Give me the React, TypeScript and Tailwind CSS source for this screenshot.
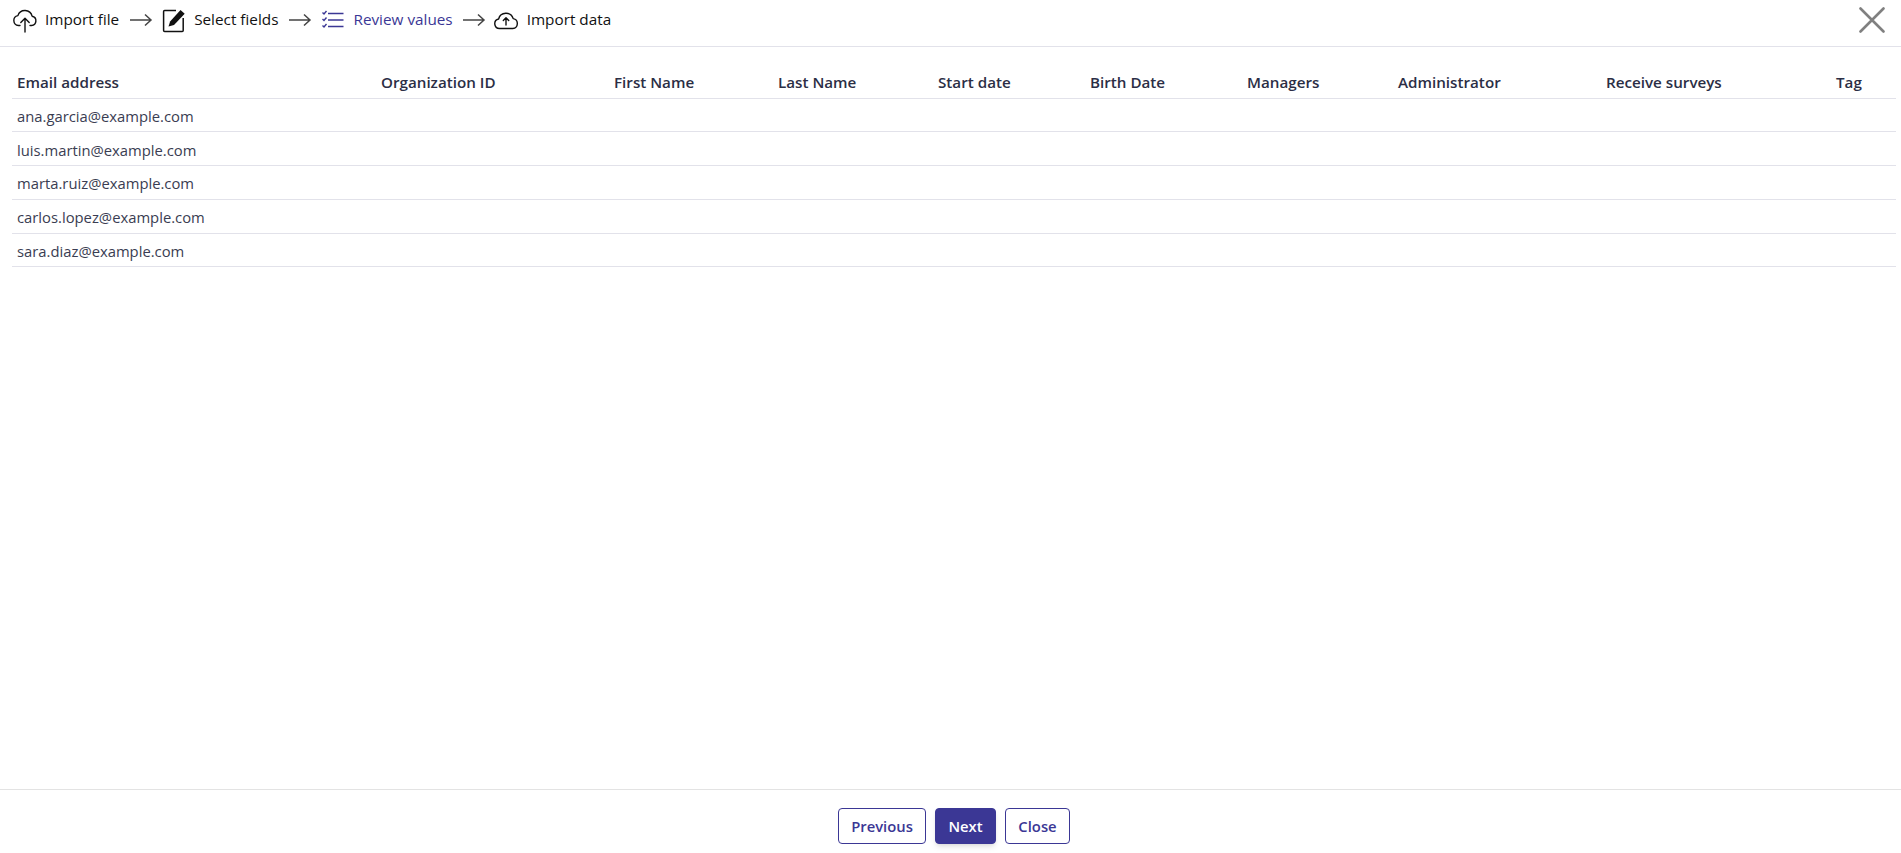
import React from "react";

const font = "font-['Open_Sans','Noto_Sans',sans-serif]";

function CloudUp() {
  return (
    <svg width="26" height="26" viewBox="0 0 26 26" fill="none" stroke="#111" strokeWidth="1.4" strokeLinecap="round" strokeLinejoin="round">
      <path d="M8 18.5H6.5a5 5 0 0 1-.6-9.9 7.4 7.4 0 0 1 14.2 .6 4.7 4.7 0 0 1-.6 9.3H18" />
      <path d="M13 25V11.5M8.8 15.5 13 11.3l4.2 4.2" />
    </svg>
  );
}
function Edit() {
  return (
    <svg width="24" height="26" viewBox="0 0 24 26" fill="none">
      <path d="M14 3.5H2.6a1 1 0 0 0-1 1v19a1 1 0 0 0 1 1h17.6a1 1 0 0 0 1-1V11" stroke="#111" strokeWidth="1.5" />
      <path d="M6.5 19.5l1.6-5L18.5 3l4.2 3.7L12 18l-5.5 1.5z" fill="#111" />
    </svg>
  );
}
function Checks() {
  return (
    <svg width="24" height="22" viewBox="0 0 24 22" fill="none" stroke="#3b3795" strokeWidth="1.4">
      <path d="M7 4.5h15.5M7 11h15.5M7 17.5h15.5" />
      <path d="M1.5 3.5l1.5 1.5 2.5-3M1.5 10l1.5 1.5 2.5-3M1.5 16.5l1.5 1.5 2.5-3" />
    </svg>
  );
}
function Cloud() {
  return (
    <svg width="26" height="22" viewBox="0 0 26 22" fill="none" stroke="#111" strokeWidth="1.4" strokeLinecap="round" strokeLinejoin="round">
      <path d="M6.5 19.5a4.8 4.8 0 0 1-.9-9.5 7.6 7.6 0 0 1 14.6-.4 5 5 0 0 1-.4 9.9z" />
      <path d="M13 16V9M10.3 11.5 13 8.8l2.7 2.7" />
    </svg>
  );
}
function Arrow() {
  return (
    <svg width="24" height="14" viewBox="0 0 24 14" fill="none" stroke="#444" strokeWidth="1.5">
      <path d="M1 7h21M16 1.5 22 7l-6 5.5" />
    </svg>
  );
}

const columns: [string, string][] = [
  ["Email address", "w-[364px]"],
  ["Organization ID", "w-[233px]"],
  ["First Name", "w-[164px]"],
  ["Last Name", "w-[160px]"],
  ["Start date", "w-[152px]"],
  ["Birth Date", "w-[157px]"],
  ["Managers", "w-[151px]"],
  ["Administrator", "w-[208px]"],
  ["Receive surveys", "w-[230px]"],
  ["Tag", "w-auto"],
];
const emails = [
  "ana.garcia@example.com",
  "luis.martin@example.com",
  "marta.ruiz@example.com",
  "carlos.lopez@example.com",
  "sara.diaz@example.com",
];

export default function App() {
  return (
    <div className={`${font} flex h-[853px] flex-col bg-white text-[14.8px]`}>
      <header className="flex h-[47px] items-center justify-between border-b border-[#e2e2ea] pb-[7px] pl-[12px] pr-[16px]">
        <div className="flex items-center text-[15.3px] text-[#111]">
          <CloudUp />
          <span className="ml-[7px]">Import file</span>
          <span className="ml-[10px] mr-[9px] flex"><Arrow /></span>
          <Edit />
          <span className="ml-[8px]">Select fields</span>
          <span className="ml-[10px] mr-[9px] flex"><Arrow /></span>
          <Checks />
          <span className="ml-[8px] text-[#3b3795]">Review values</span>
          <span className="ml-[9px] mr-[7px] flex"><Arrow /></span>
          <Cloud />
          <span className="ml-[8px]">Import data</span>
        </div>
        <button aria-label="Close" className="flex">
          <svg width="26" height="26" viewBox="0 0 26 26" stroke="#808080" strokeWidth="2.6" strokeLinecap="round">
            <path d="M1.5 1.5l23 23M24.5 1.5l-23 23" />
          </svg>
        </button>
      </header>
      <main className="flex-1 pl-[12px] pr-[5px] pt-[17px]">
        <table className="w-full table-fixed border-collapse">
          <thead>
            <tr className="h-[34px] border-b border-[#e2e2ea]">
              {columns.map(([c, w]) => (
                <th key={c} className={`${w} pl-[5px] pt-[3px] text-left text-[15.2px] font-semibold text-[#2b2e45]`}>{c}</th>
              ))}
            </tr>
          </thead>
          <tbody>
            {emails.map((e) => (
              <tr key={e} className="h-[33.8px] border-b border-[#e2e2ea]">
                <td className="pl-[5px] pt-[2px] text-[#3a3d52]">{e}</td>
                {columns.slice(1).map(([c]) => <td key={c} />)}
              </tr>
            ))}
          </tbody>
        </table>
      </main>
      <footer className="flex h-[64px] items-start justify-center gap-[9px] border-t border-[#e3e3e3] pl-[7px] pt-[18px]">
        <button className="h-[36px] w-[88px] rounded-[4px] border border-[#3b3795] font-semibold text-[#3b3795]">Previous</button>
        <button className="h-[36px] w-[61px] rounded-[4px] border border-[#3b3795] bg-[#3b3795] font-semibold text-white shadow-md">Next</button>
        <button className="h-[36px] w-[65px] rounded-[4px] border border-[#3b3795] font-semibold text-[#3b3795]">Close</button>
      </footer>
    </div>
  );
}
